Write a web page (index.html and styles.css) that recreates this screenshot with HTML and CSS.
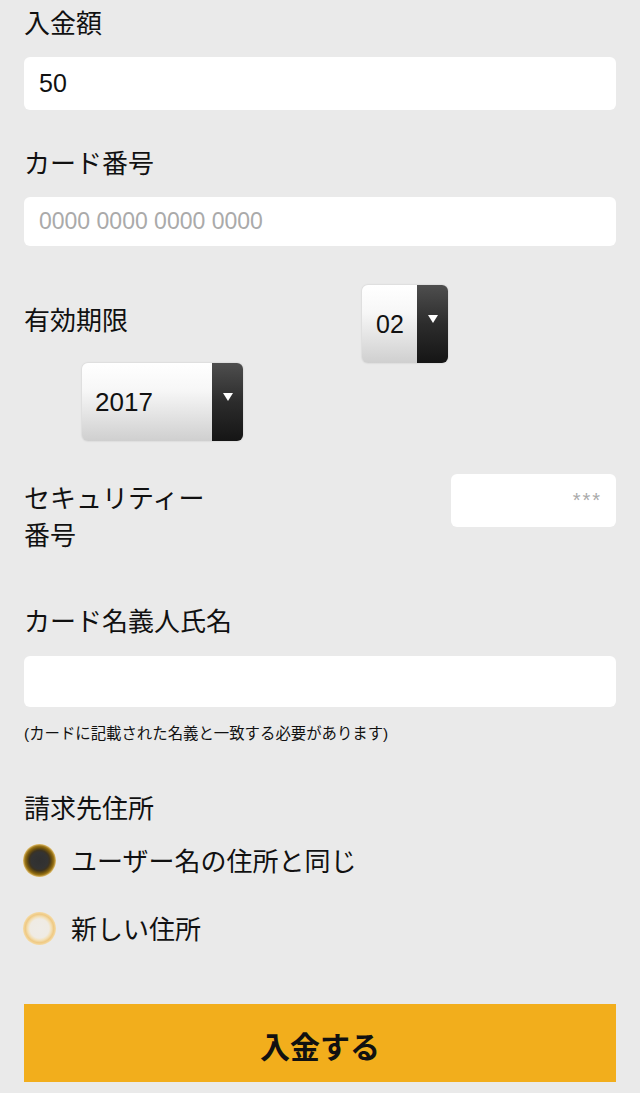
FILE: index.html
```html
<!DOCTYPE html>
<html lang="ja">
<head>
<meta charset="utf-8">
<title>入金</title>
<link rel="stylesheet" href="styles.css">
</head>
<body>
<form class="form">
  <div class="label first">入金額</div>
  <input class="field f-amount" type="text" value="50">

  <div class="label l-card">カード番号</div>
  <input class="field f-card" type="text" placeholder="0000 0000 0000 0000">

  <div class="expiry">
    <div class="label exp-label">有効期限</div>
    <div class="select sel-month">
      <div class="sel-val">02</div>
      <div class="sel-arrow"><svg width="10" height="8" viewBox="0 0 10 8"><path d="M0 0H10L5 8Z" fill="#fff"/></svg></div>
    </div>
    <div class="select sel-year">
      <div class="sel-val">2017</div>
      <div class="sel-arrow"><svg width="10" height="8" viewBox="0 0 10 8"><path d="M0 0H10L5 8Z" fill="#fff"/></svg></div>
    </div>
  </div>

  <div class="security">
    <div class="label sec-label">セキュリティー番号</div>
    <input class="field f-cvv" type="text" placeholder="***">
  </div>

  <div class="label l-name">カード名義人氏名</div>
  <input class="field f-name" type="text">
  <div class="note">(カードに記載された名義と一致する必要があります)</div>

  <div class="label l-addr">請求先住所</div>
  <div class="radio-row r1"><span class="radio on"></span><span class="radio-text">ユーザー名の住所と同じ</span></div>
  <div class="radio-row r2"><span class="radio off"></span><span class="radio-text">新しい住所</span></div>

  <button class="submit" type="button">入金する</button>
</form>
</body>
</html>
```

FILE: styles.css
```css
html, body {
  margin: 0;
  padding: 0;
}
body {
  background: #eaeaea;
  font-family: "Liberation Sans", "Noto Sans CJK JP", sans-serif;
  color: #111;
  width: 640px;
  height: 1093px;
  overflow: hidden;
}
.form {
  display: flex;
  flex-direction: column;
  padding: 9px 24px 0;
}
.label {
  font-size: 26px;
  line-height: 30px;
  color: #111;
}
.field {
  display: block;
  box-sizing: border-box;
  width: 100%;
  border: none;
  outline: none;
  background: #fff;
  border-radius: 6px;
  font-family: "Liberation Sans", "Noto Sans CJK JP", sans-serif;
  color: #111;
  padding: 0 15px;
  margin: 0;
}
.field::placeholder {
  color: #aaa;
}
.f-amount {
  margin-top: 18px;
  height: 53px;
  font-size: 25px;
}
.l-card {
  margin-top: 39px;
}
.f-card {
  margin-top: 18px;
  height: 49px;
  font-size: 23px;
}
.expiry {
  margin-top: 39px;
  display: flex;
  flex-wrap: wrap;
}
.exp-label {
  width: 338px;
  padding-top: 21px;
}
.select {
  display: flex;
  height: 78px;
  border-radius: 6px;
  overflow: hidden;
  box-shadow: 0 0 2px rgba(0, 0, 0, 0.18);
}
.sel-month {
  width: 86px;
}
.sel-year {
  width: 161px;
  margin-left: 58px;
}
.sel-val {
  flex: 1;
  display: flex;
  align-items: center;
  padding-left: 14px;
  font-size: 25px;
  color: #111;
  background: linear-gradient(#ffffff, #f7f7f7 35%, #cfcfcf);
}
.sel-year .sel-val {
  padding-left: 13px;
  font-size: 26px;
}
.sel-arrow {
  width: 31px;
  display: flex;
  justify-content: center;
  align-items: flex-start;
  padding-top: 30px;
  box-sizing: border-box;
  background: linear-gradient(#4e4e4e, #2c2c2c 50%, #151515);
}
.sel-arrow svg {
  display: block;
}
.security {
  margin-top: 33px;
  display: flex;
  justify-content: space-between;
  align-items: flex-start;
}
.sec-label {
  max-width: 200px;
  padding-top: 7px;
  line-height: 37px;
}
.f-cvv {
  width: 165px;
  height: 53px;
  font-size: 20px;
  text-align: right;
  letter-spacing: 2px;
  padding-right: 14px;
}
.l-name {
  margin-top: 52px;
}
.f-name {
  margin-top: 19px;
  height: 51px;
  font-size: 25px;
}
.note {
  margin-top: 17px;
  font-size: 15.4px;
  line-height: 20px;
  color: #111;
}
.l-addr {
  margin-top: 50px;
}
.radio-row {
  display: flex;
  align-items: center;
  height: 34px;
}
.r1 {
  margin-top: 19px;
}
.r2 {
  margin-top: 34px;
}
.radio {
  width: 33px;
  height: 33px;
  border-radius: 50%;
  flex: none;
  margin-left: -1px;
}
.radio.on {
  background: radial-gradient(circle closest-side, #303030 0, #333 50%, #3d3320 62%, #6e520e 76%, #9a7416 88%, #e3c276 100%);
}
.radio.off {
  background: radial-gradient(circle closest-side, #efece7 0, #efebe4 58%, #f3e0b6 72%, #efc983 86%, #f5dba6 100%);
}
.radio-text {
  margin-left: 15px;
  font-size: 26px;
  line-height: 34px;
  padding-top: 3px;
  color: #111;
}
.submit {
  margin-top: 59px;
  height: 78px;
  width: 100%;
  border: none;
  border-radius: 0;
  background: #f2ae1c;
  font-family: "Liberation Sans", "Noto Sans CJK JP", sans-serif;
  font-size: 30px;
  font-weight: 700;
  color: #111;
  padding: 4px 0 0;
}
```
